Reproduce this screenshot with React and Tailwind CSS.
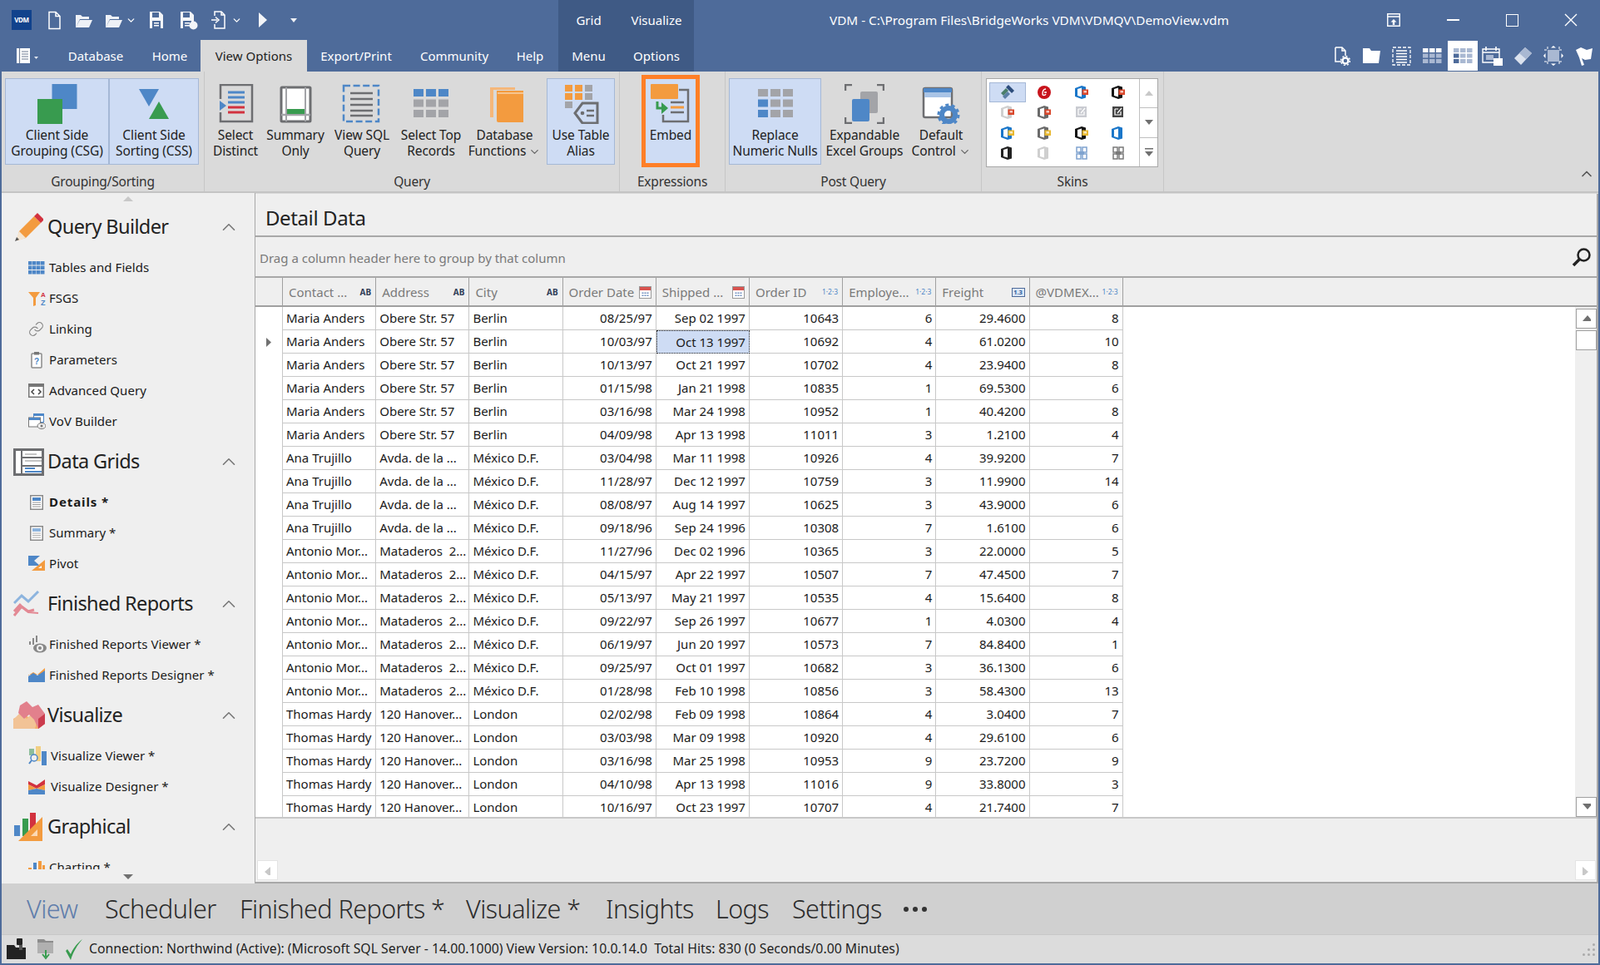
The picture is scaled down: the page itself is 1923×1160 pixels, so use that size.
import { ChevronDown, ChevronUp, Link } from 'lucide-react';

const people = {
  m: ['Maria Anders', 'Obere Str. 57', 'Berlin'],
  a: ['Ana Trujillo', 'Avda. de la ...', 'México D.F.'],
  t: ['Antonio Mor...', 'Mataderos  2...', 'México D.F.'],
  h: ['Thomas Hardy', '120 Hanover...', 'London'],
};

const rows = [
  ['m', '08/25/97', 'Sep 02 1997', '10643', '6', '29.4600', '8'],
  ['m', '10/03/97', 'Oct 13 1997', '10692', '4', '61.0200', '10'],
  ['m', '10/13/97', 'Oct 21 1997', '10702', '4', '23.9400', '8'],
  ['m', '01/15/98', 'Jan 21 1998', '10835', '1', '69.5300', '6'],
  ['m', '03/16/98', 'Mar 24 1998', '10952', '1', '40.4200', '8'],
  ['m', '04/09/98', 'Apr 13 1998', '11011', '3', '1.2100', '4'],
  ['a', '03/04/98', 'Mar 11 1998', '10926', '4', '39.9200', '7'],
  ['a', '11/28/97', 'Dec 12 1997', '10759', '3', '11.9900', '14'],
  ['a', '08/08/97', 'Aug 14 1997', '10625', '3', '43.9000', '6'],
  ['a', '09/18/96', 'Sep 24 1996', '10308', '7', '1.6100', '6'],
  ['t', '11/27/96', 'Dec 02 1996', '10365', '3', '22.0000', '5'],
  ['t', '04/15/97', 'Apr 22 1997', '10507', '7', '47.4500', '7'],
  ['t', '05/13/97', 'May 21 1997', '10535', '4', '15.6400', '8'],
  ['t', '09/22/97', 'Sep 26 1997', '10677', '1', '4.0300', '4'],
  ['t', '06/19/97', 'Jun 20 1997', '10573', '7', '84.8400', '1'],
  ['t', '09/25/97', 'Oct 01 1997', '10682', '3', '36.1300', '6'],
  ['t', '01/28/98', 'Feb 10 1998', '10856', '3', '58.4300', '13'],
  ['h', '02/02/98', 'Feb 09 1998', '10864', '4', '3.0400', '7'],
  ['h', '03/03/98', 'Mar 09 1998', '10920', '4', '29.6100', '6'],
  ['h', '03/16/98', 'Mar 25 1998', '10953', '9', '23.7200', '9'],
  ['h', '04/10/98', 'Apr 13 1998', '11016', '9', '33.8000', '3'],
  ['h', '10/16/97', 'Oct 23 1997', '10707', '4', '21.7400', '7'],
];

const BLUE = '#4e87c7';
const GREEN = '#389b4f';
const ORANGE = '#f39b3f';
const RED = '#d2323f';
const GRAY = '#6d6e71';
const LGRAY = '#a3a4a8';

function Svg({ w = 48, h = 48, className = '', children }) {
  return (
    <svg width={w} height={h} viewBox={`0 0 ${w} ${h}`} className={`block shrink-0 ${className}`}>
      {children}
    </svg>
  );
}

// ----- quick access bar
function Logo() {
  return (
    <div className="flex h-6 w-6 items-center justify-center bg-[#11428c] text-[8px] font-bold tracking-tighter text-white">VDM</div>
  );
}

function FolderOpen({ w = 22 }) {
  return (
    <Svg w={w} h={22}><path d="M1 5h6l2 2h8v3H6L1 20z M6 11h15l-4 9H1z" fill="#eef1f6" /></Svg>
  );
}

function SaveIcon({ dots }) {
  return (
    <Svg w={22} h={24}>
      <path d="M1 2h12l4 4v16H1z" fill="#f3f5f8" />
      <rect x="4" y="3" width="8" height="6" fill="#4e6b9a" />
      <rect x="4" y="13" width="10" height="9" fill="#4e6b9a" />
      <rect x="6" y="15" width="6" height="1.5" fill="#fff" />
      <rect x="6" y="18" width="6" height="1.5" fill="#fff" />
      {dots && <circle cx="16.5" cy="18.5" r="5" fill="#f3f5f8" />}
    </Svg>
  );
}

function TitleBar() {
  return (
    <div className="flex h-12 text-white">
      <div className="flex w-[669px] items-center">
        <div className="ml-[12px]"><Logo /></div>
        <div className="ml-[19px]">
          <Svg w={17} h={23}><path d="M2 1.5h8l5 5v15H2z M10 1.5v5h5" fill="none" stroke="#fff" strokeWidth="1.5" /></Svg>
        </div>
        <div className="ml-[16px]"><FolderOpen /></div>
        <div className="ml-[14px]"><FolderOpen w={24} /></div>
        <ChevronDown size={13} strokeWidth={2.4} className="ml-[1px]" />
        <div className="ml-[15px]"><SaveIcon /></div>
        <div className="ml-[15px]"><SaveIcon dots /></div>
        <div className="ml-[15px]">
          <Svg w={19} h={24}>
            <path d="M5 7V2h8l4 4v16H5v-5 M13 2v4h4" fill="none" stroke="#fff" strokeWidth="1.5" />
            <path d="M1 12h7M6 8.5l4 3.500-4 3.500" fill="none" stroke="#fff" strokeWidth="1.5" />
          </Svg>
        </div>
        <ChevronDown size={13} strokeWidth={2.4} className="ml-[6px]" />
        <div className="ml-[20px]"><Svg w={10} h={20}><path d="M0 1l10 9-10 9z" fill="#f3f5f8" /></Svg></div>
        <div className="ml-[28px]"><Svg w={8} h={5}><path d="M0 0h8L4 5z" fill="#eef1f6" /></Svg></div>
      </div>
      <div className="flex w-[73px] items-center justify-center bg-[#3f5a85] text-[15px]">Grid</div>
      <div className="flex w-[90px] items-center justify-center bg-[#3f5a85] text-[15px]">Visualize</div>
      <div className="flex w-[806px] items-center justify-center text-[15.300px]">
        VDM - C:\Program Files\BridgeWorks VDM\VDMQV\DemoView.vdm
      </div>
      <div className="flex items-center">
        <Svg w={16} h={16} className="ml-[27px]">
          <path d="M.75 .75h14.500v14.500H.75zM.75 4h14.500" fill="none" stroke="#fff" strokeWidth="1.4" />
          <path d="M8 7l3.500 3.500H9.200V14H6.800v-3.500H4.500z" fill="#fff" />
        </Svg>
        <div className="ml-[56px] h-[1.5px] w-[15px] bg-white" />
        <div className="ml-[56px] h-[15px] w-[15px] border-[1.5px] border-white" />
        <Svg w={16} h={16} className="ml-[55px]"><path d="M1 1l14 14M15 1L1 15" stroke="#fff" strokeWidth="1.4" /></Svg>
      </div>
    </div>
  );
}

// ----- ribbon tab strip
function TabItem({ w, children, active }) {
  return (
    <div className={`flex h-full items-center justify-center text-[15px] ${w} ${active ? 'bg-[#dadada] text-[#222]' : 'text-white'}`}>{children}</div>
  );
}

function MiniGrid({ on, dim = '#a9b8d2', bright = '#fff' }) {
  const cells = [];
  for (let r = 0; r < 3; r++) {
    for (let c = 0; c < 3; c++) {
      const lit = on(r, c);
      cells.push(<rect key={`${r}${c}`} x={c * 8} y={r * 6.500} width="6.500" height="5" fill={lit ? bright : dim} />);
    }
  }
  return <Svg w={23} h={18}>{cells}</Svg>;
}

function TabStrip() {
  return (
    <div className="flex h-[38px]">
      <div className="flex w-[59px] items-center text-white">
        <Svg w={32} h={24} className="ml-[17px]">
          <rect x="1" y="3" width="16" height="18" fill="#fff" />
          <path d="M4.500 3v18M7 7h8M7 10h8M7 13h8M7 16h8" stroke="#6d7b92" strokeWidth="1.200" />
          <path d="M22 13h5l-2.500 3z" fill="#dfe5ef" />
        </Svg>
      </div>
      <TabItem w="w-[108px]">Database</TabItem>
      <TabItem w="w-[70px]">Home</TabItem>
      <TabItem w="w-[2px]" />
      <TabItem w="w-[128px]" active>View Options</TabItem>
      <TabItem w="w-[118px]">Export/Print</TabItem>
      <TabItem w="w-[118px]">Community</TabItem>
      <TabItem w="w-[64px]">Help</TabItem>
      <TabItem w="w-[2px]" />
      <div className="flex w-[73px] items-center justify-center bg-[#3f5a85] text-[15px] text-white">Menu</div>
      <div className="flex w-[90px] items-center justify-center bg-[#3f5a85] text-[15px] text-white">Options</div>
      <div className="flex flex-1 items-center justify-end pr-[6px]">
        <Svg w={20} h={24} className="mr-[15px]">
          <path d="M2 2h8l4 4v6 M10 2v4h4 M2 2v17h7" fill="none" stroke="#fff" strokeWidth="1.5" />
          <circle cx="14" cy="18" r="3.500" fill="none" stroke="#fff" strokeWidth="2.500" />
          <circle cx="14" cy="18" r="5.500" fill="none" stroke="#fff" strokeWidth="1.500" strokeDasharray="2 2.300" />
        </Svg>
        <Svg w={21} h={20} className="mr-[14px]"><path d="M0 1h8l2 3h11l-2 15H0z" fill="#fff" /></Svg>
        <Svg w={23} h={23} className="mr-[14px]">
          <rect x="1" y="1" width="21" height="21" fill="none" stroke="#fff" strokeWidth="1.300" strokeDasharray="4 2" />
          <path d="M5 5h13M5 8.500h13M5 12h13M5 15.500h13M5 19h13" stroke="#fff" strokeWidth="1.500" />
        </Svg>
        <div className="mr-[7px]"><MiniGrid on={(r) => r === 0} /></div>
        <div className="mr-[5px] flex h-9 w-9 items-center justify-center bg-white">
          <MiniGrid on={(r, c) => r > 0 && c === 0} dim="#a9b8d2" bright="#4e6b9a" />
        </div>
        <Svg w={25} h={24} className="mr-[13px]">
          <path d="M1 4h20v16H1zM1 8h20" fill="none" stroke="#fff" strokeWidth="1.400" />
          <path d="M5 1v5M17 1v5" stroke="#fff" strokeWidth="1.600" />
          <path d="M5 11h9v6H5z" fill="#a9b8d2" />
          <rect x="14" y="15" width="11" height="9" fill="#fff" />
        </Svg>
        <Svg w={23} h={23} className="mr-[13px]">
          <path d="M1 14L14 1l8 7L9 22z" fill="#dbe2ee" />
          <path d="M7 8L14 1l8 7-7 7z" fill="#a9b8d2" />
        </Svg>
        <Svg w={24} h={24} className="mr-[14px]">
          <rect x="5" y="5" width="14" height="14" fill="#a9b8d2" />
          <path d="M5 1v22M19 1v22M1 5h22M1 19h22" stroke="#fff" strokeWidth="1" strokeDasharray="3 15" />
          <path d="M12 0l3 2.500H9zM12 24l3-2.500H9zM0 12l2.500-3v6zM24 12l-2.500-3v6z" fill="#fff" />
        </Svg>
        <Svg w={22} h={24}><path d="M1 5l6-3 7 3 7-2-2 13-7 1-4-2 3 8-3 1-3-10z" fill="#fff" /></Svg>
      </div>
    </div>
  );
}

// ----- ribbon
function RibbonButton({ w, active, icon, lines, chevron, embed }) {
  let frame = 'h-[104px] border border-transparent';
  if (active) frame = 'h-[104px] border border-[#a5b8d6] bg-[#cedcf4]';
  if (embed) frame = '-mt-[4px] h-[111px] border-[5px] border-[#ff7f27] bg-[#cedcf4]';
  return (
    <div className={`flex shrink-0 flex-col items-center ${w} ${frame}`}>
      <div className="mt-[6px] h-[52px]">{icon}</div>
      <div className="text-center text-[15.500px] leading-[19px] tracking-[-0.1px] text-[#222]">
        {lines.map((l, i) => (
          <div key={l} className="whitespace-nowrap">
            {l}
            {chevron && i === lines.length - 1 && <ChevronDown size={15} strokeWidth={2} className="ml-[3px] inline text-[#666]" />}
          </div>
        ))}
      </div>
    </div>
  );
}

function RibbonGroup({ w, label, children }) {
  return (
    <div className={`flex h-full shrink-0 flex-col border-r border-[#c6c6c6] ${w}`}>
      <div className="flex h-[120px] items-start pt-[8px]">{children}</div>
      <div className="flex flex-1 items-center justify-center pt-[1px] text-[15.500px] tracking-[-0.2px] text-[#333]">{label}</div>
    </div>
  );
}

const icons = {
  csg: (
    <Svg>
      <rect x="17.500" width="30" height="30" fill={BLUE} />
      <rect y="18" width="30" height="30" fill={GREEN} />
    </Svg>
  ),
  css: (
    <Svg>
      <path d="M6 6h24L18 27z" fill={BLUE} />
      <path d="M30 21l12 21H18z" fill={GREEN} />
    </Svg>
  ),
  distinct: (
    <Svg>
      <path d="M6 34V45H44V1H6V18" fill="none" stroke={GRAY} strokeWidth="2.500" />
      <path d="M15 10h20M15 16h20M15 22h20" stroke={BLUE} strokeWidth="3" />
      <path d="M15 28h20M15 34h20" stroke={RED} strokeWidth="3" />
      <path d="M5 20l8 6-8 6z" fill={BLUE} />
    </Svg>
  ),
  summary: (
    <Svg>
      <rect x="7" y="4" width="35" height="41" fill="#fff" stroke={GRAY} strokeWidth="3" rx="1" />
      <path d="M13 4v41M36 4v41" stroke={LGRAY} strokeWidth="2" />
      <path d="M7 37h35" stroke={LGRAY} strokeWidth="2.500" />
      <rect x="14" y="30" width="21" height="6" fill={GREEN} />
    </Svg>
  ),
  sql: (
    <Svg>
      <rect x="2" y="2" width="42" height="43" fill="none" stroke={BLUE} strokeWidth="2.500" strokeDasharray="8 3.600" />
      <path d="M10 11h27M10 18h27M10 25h27M10 32h27M10 38h27" stroke={GRAY} strokeWidth="2.500" />
    </Svg>
  ),
  top: (
    <Svg>
      {[0, 1, 2].map((r) => [0, 1, 2].map((c) => (
        <rect key={`${r}${c}`} x={3 + c * 15} y={6 + r * 12.500} width="12" height="9" fill={r === 0 ? BLUE : LGRAY} />
      )))}
    </Svg>
  ),
  db: (
    <Svg>
      <path d="M6 4h30v3H10v33H6z" fill="#f5b77a" />
      <path d="M14 8h32v38H16a2 2 0 0 1-2-2z" fill={ORANGE} />
      <path d="M15 11h31" stroke="#f9d2a9" strokeWidth="1.500" />
    </Svg>
  ),
  alias: (
    <Svg>
      {[0, 1, 2].map((r) => [0, 1, 2].map((c) => (
        (r === 2 && c > 0) ? null : <rect key={`${r}${c}`} x={5 + c * 12} y={1 + r * 10} width="9" height="8" fill={r === 2 || c === 2 ? LGRAY : ORANGE} />
      )))}
      <path d="M26 23h18v24H26l-9-12z" fill="#cedcf4" stroke={GRAY} strokeWidth="3" />
      <circle cx="26" cy="35" r="2.300" fill={GRAY} />
      <path d="M31 32h9M31 38h9" stroke={GRAY} strokeWidth="2.500" />
    </Svg>
  ),
  embed: (
    <Svg>
      <path d="M34 7H45V45H15V37" fill="none" stroke={GRAY} strokeWidth="2.500" />
      <rect x="0" y="0" width="33" height="18" rx="1" fill={ORANGE} />
      <path d="M24 22h16M24 34h16" stroke={GRAY} strokeWidth="2.500" />
      <path d="M24 28h16" stroke={ORANGE} strokeWidth="3" />
      <path d="M8 21v8h6" fill="none" stroke={GREEN} strokeWidth="3" />
      <path d="M13 22l8 7-8 7z" fill={GREEN} />
    </Svg>
  ),
  nulls: (
    <Svg>
      {[0, 1, 2].map((r) => [0, 1, 2].map((c) => (
        <rect key={`${r}${c}`} x={3 + c * 15} y={6 + r * 12.500} width="12" height="9" fill={c === 0 && r > 0 ? BLUE : LGRAY} />
      )))}
    </Svg>
  ),
  excel: (
    <Svg>
      <path d="M1 8V1h8M39 1h8v7M1 40v7h8M39 47h8v-7" fill="none" stroke={GRAY} strokeWidth="2.500" />
      <rect x="19" y="9" width="21" height="26" rx="2" fill={LGRAY} />
      <rect x="9" y="18" width="21" height="27" rx="2" fill={BLUE} />
    </Svg>
  ),
  control: (
    <Svg>
      <rect x="3" y="5" width="34" height="35" fill="#fff" stroke={GRAY} strokeWidth="2.500" rx="2" />
      <rect x="3" y="5" width="34" height="5" fill={BLUE} />
      <rect x="4" y="10" width="32" height="6" fill="#a9c4e6" />
      <circle cx="33" cy="37" r="8" fill="none" stroke={BLUE} strokeWidth="6" />
      <circle cx="33" cy="37" r="12" fill="none" stroke={BLUE} strokeWidth="3" strokeDasharray="4 3.500" />
    </Svg>
  ),
};

function OfficeMark({ c, tag }) {
  return (
    <Svg w={18} h={18}>
      <path fillRule="evenodd" d="M1 4l8-3 5 1.500v13L9 17l-8-3zM4 5v8l5 1.500v-11z" fill={c} />
      {tag && <rect x="9.500" y="5.500" width="7.500" height="6.500" fill={tag} />}
      {tag && <rect x="11.500" y="7" width="3.500" height="2.500" fill="#fff" opacity="0.7" />}
    </Svg>
  );
}

function NoteMark({ bg, fg }) {
  return (
    <Svg w={18} h={18}>
      <rect x="2" y="2" width="13" height="13" fill={bg} />
      <path d="M5 5h4M5 5v7h7V8M13 4l-5 6" fill="none" stroke={fg} strokeWidth="1.200" />
    </Svg>
  );
}

function KnotMark({ c }) {
  return (
    <Svg w={18} h={18}>
      <path d="M3 2h5v6H3zM3 10h5v6H3zM10 2h5v6h-5zM10 10h5v6h-5z" fill="none" stroke={c} strokeWidth="1.500" />
      <rect x="6" y="7" width="6" height="4" fill={c} />
    </Svg>
  );
}

const skins = [
  <Svg key="n" w={18} h={20}>
    <path d="M1 11l6-6 3 3-6 6z" fill="#4a7f6a" />
    <path d="M5 17l6-6 3 3-6 6z" fill="#5a7fa5" transform="translate(-2 -2)" />
    <path d="M7 4l3-3 7 7-3 3z" fill="#2d4d7c" />
  </Svg>,
  <Svg key="r" w={18} h={18}>
    <circle cx="9" cy="9" r="8" fill="#c8141c" />
    <path d="M11 5c-3 0-4 3-4 6 0 2 3 2 4 0M9 9h3" fill="none" stroke="#fff" strokeWidth="1.400" />
  </Svg>,
  <OfficeMark key="a" c="#1976c9" tag="#d9472b" />,
  <OfficeMark key="b" c="#111" tag="#d9472b" />,
  <OfficeMark key="c" c="#cfcfcf" tag="#d9472b" />,
  <OfficeMark key="d" c="#6a6a6a" tag="#d9472b" />,
  <NoteMark key="e" bg="#c9cbd1" fg="#fff" />,
  <NoteMark key="f" bg="#444" fg="#fff" />,
  <OfficeMark key="g" c="#1976c9" tag="#e8b830" />,
  <OfficeMark key="h" c="#6a6a6a" tag="#e8b830" />,
  <OfficeMark key="i" c="#111" tag="#e8b830" />,
  <OfficeMark key="j" c="#1976c9" />,
  <OfficeMark key="k" c="#222" />,
  <OfficeMark key="l" c="#cfcfcf" />,
  <KnotMark key="m" c="#7fa3cf" />,
  <KnotMark key="o" c="#7a7a7a" />,
];

function SkinGallery() {
  return (
    <div className="ml-[5px] flex h-[107px] w-[207px] border border-[#a8a8a8] bg-white">
      <div className="grid flex-1 grid-cols-4 grid-rows-4 items-center justify-items-center px-[3px] py-[4px]">
        {skins.map((s, i) => (
          <div key={i} className={`flex h-[24px] w-[44px] items-center justify-center ${i === 0 ? 'border border-[#a5b8d6] bg-[#cedcf4]' : ''}`}>
            {s}
          </div>
        ))}
      </div>
      <div className="flex w-[22px] flex-col border-l border-[#c0c0c0]">
        <div className="flex flex-1 items-center justify-center"><Svg w={10} h={6}><path d="M0 6h10L5 0z" fill="#c8c8c8" /></Svg></div>
        <div className="flex flex-1 items-center justify-center border-y border-[#c0c0c0]"><Svg w={10} h={6}><path d="M0 0h10L5 6z" fill="#707070" /></Svg></div>
        <div className="flex flex-1 items-center justify-center"><Svg w={10} h={10}><path d="M0 0h10v1.500H0zM0 4h10L5 10z" fill="#707070" /></Svg></div>
      </div>
    </div>
  );
}

function Ribbon() {
  return (
    <div className="flex h-[146px] shrink-0 border-b-2 border-[#c4c4c4] bg-[#dadada]">
      <RibbonGroup w="w-[244px]" label="Grouping/Sorting">
        <div className="w-[4px]" />
        <RibbonButton w="w-[125px]" active icon={icons.csg} lines={['Client Side', 'Grouping (CSG)']} />
        <RibbonButton w="w-[108px]" active icon={icons.css} lines={['Client Side', 'Sorting (CSS)']} />
      </RibbonGroup>
      <RibbonGroup w="w-[499px]" label="Query">
        <RibbonButton w="w-[74px]" icon={icons.distinct} lines={['Select', 'Distinct']} />
        <RibbonButton w="w-[70px]" icon={icons.summary} lines={['Summary', 'Only']} />
        <RibbonButton w="w-[90px]" icon={icons.sql} lines={['View SQL', 'Query']} />
        <RibbonButton w="w-[76px]" icon={icons.top} lines={['Select Top', 'Records']} />
        <RibbonButton w="w-[101px]" icon={icons.db} lines={['Database', 'Functions']} chevron />
        <RibbonButton w="w-[82px]" active icon={icons.alias} lines={['Use Table', 'Alias']} />
      </RibbonGroup>
      <RibbonGroup w="w-[127px]" label="Expressions">
        <div className="w-[26px]" />
        <RibbonButton w="w-[70px]" embed icon={icons.embed} lines={['Embed']} />
      </RibbonGroup>
      <RibbonGroup w="w-[308px]" label="Post Query">
        <div className="w-[4px]" />
        <RibbonButton w="w-[111px]" active icon={icons.nulls} lines={['Replace', 'Numeric Nulls']} />
        <RibbonButton w="w-[104px]" icon={icons.excel} lines={['Expandable', 'Excel Groups']} />
        <RibbonButton w="w-[80px]" icon={icons.control} lines={['Default', 'Control']} chevron />
      </RibbonGroup>
      <RibbonGroup w="w-[219px]" label="Skins">
        <SkinGallery />
      </RibbonGroup>
      <div className="flex flex-1 items-end justify-end pb-[11px] pr-[4px]">
        <ChevronUp size={20} strokeWidth={2} className="text-[#555]" />
      </div>
    </div>
  );
}

// ----- left navigation
const side = {
  query: (
    <Svg w={36} h={36}>
      <path d="M7 23L25 5l8 8-18 18-11 3z" fill={ORANGE} />
      <path d="M25 5l4-4 8 8-4 4z" fill={RED} />
      <path d="M4 31l3-8 8 8-8 3z" fill="#f5e6d2" />
      <path d="M2 35l2-5 3 3z" fill="#555" />
    </Svg>
  ),
  grids: (
    <Svg w={37} h={33}>
      <rect x="1.500" y="1.500" width="34" height="30" fill="#fff" stroke={GRAY} strokeWidth="3" />
      <path d="M10 1v31M10 11h26M10 21h26" stroke={GRAY} strokeWidth="2" />
      <path d="M14 7h14M14 15h20" stroke="#c6c6c6" strokeWidth="2" />
      <path d="M14 24h12M14 28h20" stroke={BLUE} strokeWidth="2" />
    </Svg>
  ),
  reports: (
    <Svg w={32} h={32}>
      <path d="M1 15l9-9 8 7 12-12" fill="none" stroke="#8db4de" strokeWidth="3" />
      <path d="M1 30l9-11 8 6 7-2M1 25l8-9" fill="none" stroke="#e38994" strokeWidth="3" />
      <path d="M10 20l8 6 12 1" fill="none" stroke="#e38994" strokeWidth="2" />
    </Svg>
  ),
  visualize: (
    <Svg w={38} h={36}>
      <path d="M0 34V22l12-6 6 4 8-4 12 12-8 6z" fill="#f5b06c" />
      <path d="M0 23L8 15l8 7 6-6 6 10-2 8H0z" fill="#f2c396" />
      <path d="M8 6l8-5 7 7 7-3 8 11v12l-8 6-5-11-6-6-6 5-7-7z" fill="#e2808c" />
      <path d="M30 22l8-6v12l-8 6z" fill="#cb3c4e" />
    </Svg>
  ),
  graphical: (
    <Svg w={36} h={36}>
      <rect x="1" y="16" width="7" height="13" fill={BLUE} />
      <rect x="11" y="8" width="7" height="21" fill={GREEN} />
      <rect x="20" y="1" width="7" height="22" fill={RED} />
      <path d="M35 6v29H6z" fill={ORANGE} />
      <path d="M29 21v8h-8z" fill="#fcd9b4" />
    </Svg>
  ),
  tables: (
    <Svg w={20} h={16}>
      {[0, 1, 2].map((r) => [0, 1, 2, 3].map((c) => <rect key={`${r}${c}`} x={c * 5} y={r * 5.500} width="4.500" height="4.500" fill={BLUE} />))}
    </Svg>
  ),
  fsgs: (
    <Svg w={22} h={20}>
      <path d="M0 2h14L9 9v9l-3 1V9z" fill={ORANGE} />
      <text x="15" y="8" fontSize="8" fontWeight="700" fill={RED} fontFamily="Liberation Sans">A</text>
      <text x="15" y="18" fontSize="9" fontWeight="700" fill={BLUE} fontFamily="Liberation Sans">Z</text>
    </Svg>
  ),
  params: (
    <Svg w={14} h={20}>
      <rect x="1" y="2" width="12" height="17" rx="1" fill="#fff" stroke="#8a8a8a" strokeWidth="1.500" />
      <rect x="4" y="0" width="6" height="3.500" fill="#777" />
      <text x="4" y="15" fontSize="10" fontWeight="700" fill={BLUE} fontFamily="Liberation Sans">?</text>
    </Svg>
  ),
  advanced: (
    <Svg w={19} h={17}>
      <rect x=".75" y=".75" width="17.500" height="15.500" fill="#fff" stroke="#777" strokeWidth="1.500" />
      <rect x="1" y="1" width="17" height="3" fill="#777" />
      <path d="M7 7l-3 3 3 3M12 7l3 3-3 3" fill="none" stroke="#444" strokeWidth="1.500" />
    </Svg>
  ),
  vov: (
    <Svg w={21} h={19}>
      <rect x="6" y="0" width="13" height="11" fill={BLUE} />
      <rect x="7" y="3" width="11" height="7" fill="#fff" />
      <rect x=".5" y="5" width="14" height="11" fill="#fff" stroke="#777" />
      <rect x="1" y="5" width="13" height="3" fill={BLUE} />
      <ellipse cx="16" cy="15" rx="5" ry="3.500" fill="#efefef" stroke="#777" />
      <circle cx="16" cy="15" r="1.500" fill="#777" />
    </Svg>
  ),
  details: (
    <Svg w={16} h={18}>
      <rect x=".75" y=".75" width="14.500" height="16.500" fill="#fff" stroke="#8a8a8a" strokeWidth="1.500" />
      <rect x="3" y="3" width="10" height="4" fill={BLUE} />
      <path d="M3 9h10M3 11.500h10M3 14h10" stroke="#999" />
    </Svg>
  ),
  summary: (
    <Svg w={16} h={18}>
      <rect x=".75" y=".75" width="14.500" height="16.500" fill="#fff" stroke="#8a8a8a" strokeWidth="1.500" />
      <rect x="3" y="3" width="10" height="4" fill="#8db4de" />
      <path d="M3 9h10M3 11.500h10M3 14h10" stroke="#aaa" />
    </Svg>
  ),
  pivot: (
    <Svg w={20} h={19}>
      <path d="M0 0h14l-7 6 7 6H0z" fill={BLUE} />
      <path d="M20 5v13H4z" fill={ORANGE} />
      <path d="M16 12v3h-4z" fill="#fff" />
    </Svg>
  ),
  viewer: (
    <Svg w={23} h={22}>
      <path d="M1 7h2v4H1zM5 3h2v8H5zM9 0h2v8H9z" fill="#888" />
      <ellipse cx="14" cy="15" rx="8" ry="5.500" fill="#888" />
      <circle cx="14" cy="15" r="4" fill="#efefef" />
      <circle cx="14" cy="15" r="2" fill="#888" />
    </Svg>
  ),
  designer: (
    <Svg w={20} h={17}>
      <path d="M0 9l6-4 5 3 9-8v8H0z" fill={ORANGE} />
      <path d="M0 10l6-4 5 3 9-6v14H0z" fill={BLUE} />
    </Svg>
  ),
  vviewer: (
    <Svg w={23} h={23}>
      <rect x="1" y="3" width="6" height="8" fill="#8dbd9a" />
      <rect x="9" y="0" width="6" height="18" fill="#f2cf82" />
      <rect x="16" y="6" width="6" height="17" fill={BLUE} />
      <circle cx="7" cy="14" r="4" fill="#efefef" stroke={BLUE} strokeWidth="1.500" />
      <path d="M4 17l-3 4" stroke={BLUE} strokeWidth="2" />
    </Svg>
  ),
  vdesigner: (
    <Svg w={20} h={18}>
      <path d="M0 2l10 5 10-7v6L10 11 0 6z" fill={RED} />
      <path d="M0 6l10 5 10-5v7l-10-2-10 2z" fill={ORANGE} />
      <path d="M0 13l10-2 10 2v5H0z" fill={BLUE} />
    </Svg>
  ),
  charting: (
    <Svg w={20} h={16}>
      <rect x="0" y="8" width="4" height="8" fill={ORANGE} />
      <rect x="6" y="2" width="4" height="14" fill={BLUE} />
      <rect x="12" y="0" width="4" height="16" fill={ORANGE} />
      <rect x="17" y="5" width="3" height="11" fill={ORANGE} />
    </Svg>
  ),
};

function NavHeader({ icon, label }) {
  return (
    <div className="flex h-[60px] items-center">
      <div className="flex w-[55px] shrink-0 items-center pl-[14px]">{icon}</div>
      <span className="text-[23.500px] tracking-[-0.6px] text-[#222]">{label}</span>
      <ChevronUp size={26} strokeWidth={1.500} className="ml-auto mr-[18px] shrink-0 text-[#777]" />
    </div>
  );
}

function NavItem({ icon, label, bold, textX = 'w-[57px]' }) {
  return (
    <div className="flex h-[37px] items-center">
      <div className={`flex shrink-0 justify-start pl-[32px] ${textX}`}>{icon}</div>
      <span className={`whitespace-nowrap text-[#1a1a1a] ${bold ? 'text-[15px] font-bold tracking-[0.9px]' : 'text-[15px] tracking-[0.05px]'}`}>{label}</span>
    </div>
  );
}

function Sidebar() {
  return (
    <aside className="flex h-full w-[305px] shrink-0 flex-col border-r border-[#a8a8a8] bg-[#efefef]">
      <div className="flex h-[11px] shrink-0 items-end justify-center pb-[1px]">
        <Svg w={12} h={6}><path d="M0 6h12L6 0z" fill="#c8c8c8" /></Svg>
      </div>
      <div className="min-h-0 flex-1 overflow-hidden">
        <NavHeader icon={side.query} label="Query Builder" />
        <NavItem icon={side.tables} label="Tables and Fields" />
        <NavItem icon={side.fsgs} label="FSGS" />
        <NavItem icon={<Link size={19} strokeWidth={1.500} className="text-[#888]" />} label="Linking" />
        <NavItem icon={<div className="pl-[3px]">{side.params}</div>} label="Parameters" />
        <NavItem icon={side.advanced} label="Advanced Query" />
        <NavItem icon={side.vov} label="VoV Builder" />
        <NavHeader icon={side.grids} label="Data Grids" />
        <NavItem icon={<div className="pl-[2px]">{side.details}</div>} label="Details *" bold />
        <NavItem icon={<div className="pl-[2px]">{side.summary}</div>} label="Summary *" />
        <NavItem icon={side.pivot} label="Pivot" />
        <NavHeader icon={side.reports} label="Finished Reports" />
        <NavItem icon={side.viewer} label="Finished Reports Viewer *" />
        <NavItem icon={side.designer} label="Finished Reports Designer *" />
        <NavHeader icon={side.visualize} label="Visualize" />
        <NavItem icon={side.vviewer} label="Visualize Viewer *" textX="w-[59px]" />
        <NavItem icon={side.vdesigner} label="Visualize Designer *" textX="w-[59px]" />
        <NavHeader icon={side.graphical} label="Graphical" />
        <NavItem icon={side.charting} label="Charting *" />
      </div>
      <div className="flex h-[17px] shrink-0 items-center justify-center">
        <Svg w={12} h={6}><path d="M0 0h12L6 6z" fill="#707070" /></Svg>
      </div>
    </aside>
  );
}

// ----- data grid
function TypeIcon({ kind }) {
  if (kind === 'ab') return <span className="font-['Liberation_Serif',serif] text-[10px] font-bold text-[#2f3d57]">AB</span>;
  if (kind === 'num') return <span className="font-['Liberation_Sans',sans-serif] text-[8.500px] text-[#4e87c7]">1·2·3</span>;
  if (kind === 'dec') {
    return (
      <span className="flex h-[11px] w-[16px] items-center justify-center border border-[#4e6b9a] bg-[#dbe6f5] font-['Liberation_Sans',sans-serif] text-[7.500px] font-bold text-[#2f5f9e]">1.3</span>
    );
  }
  return (
    <Svg w={15} h={15}>
      <rect x=".5" y=".5" width="14" height="14" fill="#fff" stroke="#999" />
      <rect x="1" y="1" width="13" height="4" fill="#d9534f" />
      <path d="M3.500 7.500h2v1.500h-2zM6.500 7.500h2v1.500h-2zM9.500 7.500h2v1.500h-2zM3.500 10.500h2v1.500h-2zM6.500 10.500h2v1.500h-2zM9.500 10.500h2v1.500h-2z" fill="#6f8fbf" />
    </Svg>
  );
}

const columns = [
  ['Contact ...', 'ab'],
  ['Address', 'ab'],
  ['City', 'ab'],
  ['Order Date', 'cal'],
  ['Shipped ...', 'cal'],
  ['Order ID', 'num'],
  ['Employe...', 'num'],
  ['Freight', 'dec'],
  ['@VDMEX...', 'num'],
];

function GridHeader() {
  return (
    <div className="flex h-[35px] shrink-0 border-b-2 border-[#a0a0a0] bg-[#efefef]">
      <div className="h-full w-[33px] shrink-0 border-r border-[#a0a0a0]" />
      {columns.map(([name, kind]) => (
        <div key={name} className="flex h-full w-[112.200px] shrink-0 items-center justify-between border-r border-[#a0a0a0] pl-[7px] pr-[5px] pt-[2px]">
          <span className="whitespace-nowrap text-[#7a7a7a]">{name}</span>
          <TypeIcon kind={kind} />
        </div>
      ))}
    </div>
  );
}

function Cell({ children, right, selected }) {
  let cls = 'border-b border-r border-[#c8c8c8]';
  if (selected) cls = 'border border-dotted border-[#222] bg-[#cedcf4]';
  return (
    <div className={`flex h-[28px] w-[112.200px] shrink-0 items-center whitespace-pre px-1 text-[#1a1a1a] ${right ? 'justify-end' : ''} ${cls}`}>
      {children}
    </div>
  );
}

function GridRow({ row, index }) {
  const [who, ...rest] = row;
  const vals = people[who];
  return (
    <div className="flex h-[28px]">
      <div className="flex h-[28px] w-[33px] shrink-0 items-center justify-center border-r border-[#c8c8c8] bg-white">
        {index === 1 && <Svg w={6} h={11}><path d="M0 0l6 5.500L0 11z" fill="#707070" /></Svg>}
      </div>
      {vals.map((v) => <Cell key={v}>{v}</Cell>)}
      {rest.map((v, i) => (
        <Cell key={i} right selected={index === 1 && i === 1}>{v}</Cell>
      ))}
    </div>
  );
}

function ScrollBtn({ dir, faded }) {
  const paths = { up: 'M0 7h12L6 0z', down: 'M0 0h12L6 7z', left: 'M7 0v12L0 6z', right: 'M0 0v12l7-6z' };
  return (
    <div className={`flex h-[24px] w-[25px] items-center justify-center border ${faded ? 'border-[#e4e4e4] bg-white' : 'border-[#a0a0a0] bg-white'}`}>
      <Svg w={12} h={12}><path transform="translate(2 2)" d={paths[dir]} fill={faded ? '#c8c8c8' : '#707070'} /></Svg>
    </div>
  );
}

function VScroll() {
  return (
    <div className="flex w-[26px] shrink-0 flex-col items-center bg-[#efefef] pt-[2px]">
      <ScrollBtn dir="up" />
      <div className="mt-[2px] h-[24px] w-[25px] border border-[#a0a0a0] bg-white" />
      <div className="mt-auto">
        <ScrollBtn dir="down" />
      </div>
    </div>
  );
}

function MainPanel() {
  return (
    <main className="flex h-full min-w-0 flex-1 flex-col border-b-2 border-r-2 border-[#a8a8a8] bg-[#efefef]">
      <div className="flex h-[52px] shrink-0 items-center border-b-2 border-[#a8a8a8] pl-[12px] pt-[7px] text-[24px] tracking-[-0.4px] text-[#222]">
        Detail Data
      </div>
      <div className="flex h-[49px] shrink-0 items-center justify-between border-b-2 border-[#a8a8a8] pl-[5px] pr-[6px] font-['DejaVu_Sans',sans-serif] text-[15px] text-[#7a7a7a] [font-stretch:condensed]">
        <span className="pt-[4px]">Drag a column header here to group by that column</span>
        <Svg w={24} h={24}>
          <circle cx="14.500" cy="9.500" r="7" fill="none" stroke="#222" strokeWidth="2.500" />
          <path d="M9.500 14.500L2 22" stroke="#222" strokeWidth="3.500" />
        </Svg>
      </div>
      <div className="flex min-h-0 flex-1 flex-col font-['DejaVu_Sans',sans-serif] text-[15px] [font-stretch:condensed]">
        <GridHeader />
        <div className="flex min-h-0 flex-1">
          <div className="min-h-0 min-w-0 flex-1 overflow-hidden bg-white">
            {rows.map((r, i) => <GridRow key={i} row={r} index={i} />)}
          </div>
          <VScroll />
        </div>
      </div>
      <div className="flex h-[78px] shrink-0 items-end justify-between border-t-2 border-[#c8c8c8] pb-[2px] pl-[2px] pr-[1px]">
        <ScrollBtn dir="left" faded />
        <ScrollBtn dir="right" faded />
      </div>
    </main>
  );
}

function BottomTabs() {
  const tabs = [
    ['View', 'w-[94px]', 'text-[#5f7dab]'],
    ['Scheduler', 'w-[162px]', 'text-[#2b2b2b]'],
    ['Finished Reports *', 'w-[272px]', 'text-[#2b2b2b]'],
    ['Visualize *', 'w-[168px]', 'text-[#2b2b2b]'],
    ['Insights', 'w-[132px]', 'text-[#2b2b2b]'],
    ['Logs', 'w-[92px]', 'text-[#2b2b2b]'],
    ['Settings', 'w-[134px]', 'text-[#2b2b2b]'],
  ];
  return (
    <div className="flex h-[61px] shrink-0 items-center bg-[#d0d0d0] pl-[30px] font-['Roboto',sans-serif] text-[30.500px] font-light tracking-[-0.55px]">
      {tabs.map(([t, w, c]) => <div key={t} className={`shrink-0 whitespace-nowrap ${w} ${c}`}>{t}</div>)}
      <div className="flex gap-[5px]">
        <span className="h-[6px] w-[6px] rounded-full bg-[#333]" />
        <span className="h-[6px] w-[6px] rounded-full bg-[#333]" />
        <span className="h-[6px] w-[6px] rounded-full bg-[#333]" />
      </div>
    </div>
  );
}

function StatusBar() {
  return (
    <div className="flex h-[35px] shrink-0 items-center border-t border-[#c8c8c8] bg-[#dcdcdc] pl-[5px]">
      <Svg w={26} h={28}>
        <rect x="13" y="1" width="7" height="8" rx="1" fill="#222" />
        <path d="M1 9h9l2 3h12v14H1z" fill="#222" />
        <path d="M16 9h4v6h-4z" fill="#555" />
      </Svg>
      <Svg w={22} h={26} className="ml-[11px]">
        <path d="M1 1h8l2 2h9v15H1z" fill="#8c8c8c" />
        <path d="M1 5h19v13H1z" fill="#b0b0b0" />
        <path d="M11 14v8M7 19l4 5 4-5" fill="none" stroke={GREEN} strokeWidth="2" />
      </Svg>
      <Svg w={22} h={26} className="ml-[12px]">
        <path d="M1 15l6 11c3-10 8-18 14-25C13 7 9 14 7 19L3 13z" fill={GREEN} />
      </Svg>
      <span className="ml-[7px] whitespace-pre font-['DejaVu_Sans',sans-serif] text-[15.800px] text-[#1f1f1f] [font-stretch:condensed]">
        Connection: Northwind (Active): (Microsoft SQL Server - 14.00.1000) View Version: 10.0.14.0  Total Hits: 830 (0 Seconds/0.00 Minutes)
      </span>
      <div className="ml-auto mr-[4px] grid grid-cols-3 gap-[3px]">
        <span />
        <span />
        <span className="h-[3px] w-[3px] rounded-full bg-[#aaa]" />
        <span />
        <span className="h-[3px] w-[3px] rounded-full bg-[#aaa]" />
        <span className="h-[3px] w-[3px] rounded-full bg-[#aaa]" />
        <span className="h-[3px] w-[3px] rounded-full bg-[#aaa]" />
        <span className="h-[3px] w-[3px] rounded-full bg-[#aaa]" />
        <span className="h-[3px] w-[3px] rounded-full bg-[#aaa]" />
      </div>
    </div>
  );
}

export default function App() {
  return (
    <div className="flex h-screen w-screen flex-col overflow-hidden border-x-2 border-b-2 border-[#4e6b9a] bg-[#dadada] font-['Open_Sans',sans-serif]">
      <header className="shrink-0 bg-[#4e6b9a]">
        <TitleBar />
        <TabStrip />
      </header>
      <Ribbon />
      <div className="flex min-h-0 flex-1">
        <Sidebar />
        <div className="flex min-w-0 flex-1 pt-[1px]">
          <MainPanel />
        </div>
      </div>
      <BottomTabs />
      <StatusBar />
    </div>
  );
}
